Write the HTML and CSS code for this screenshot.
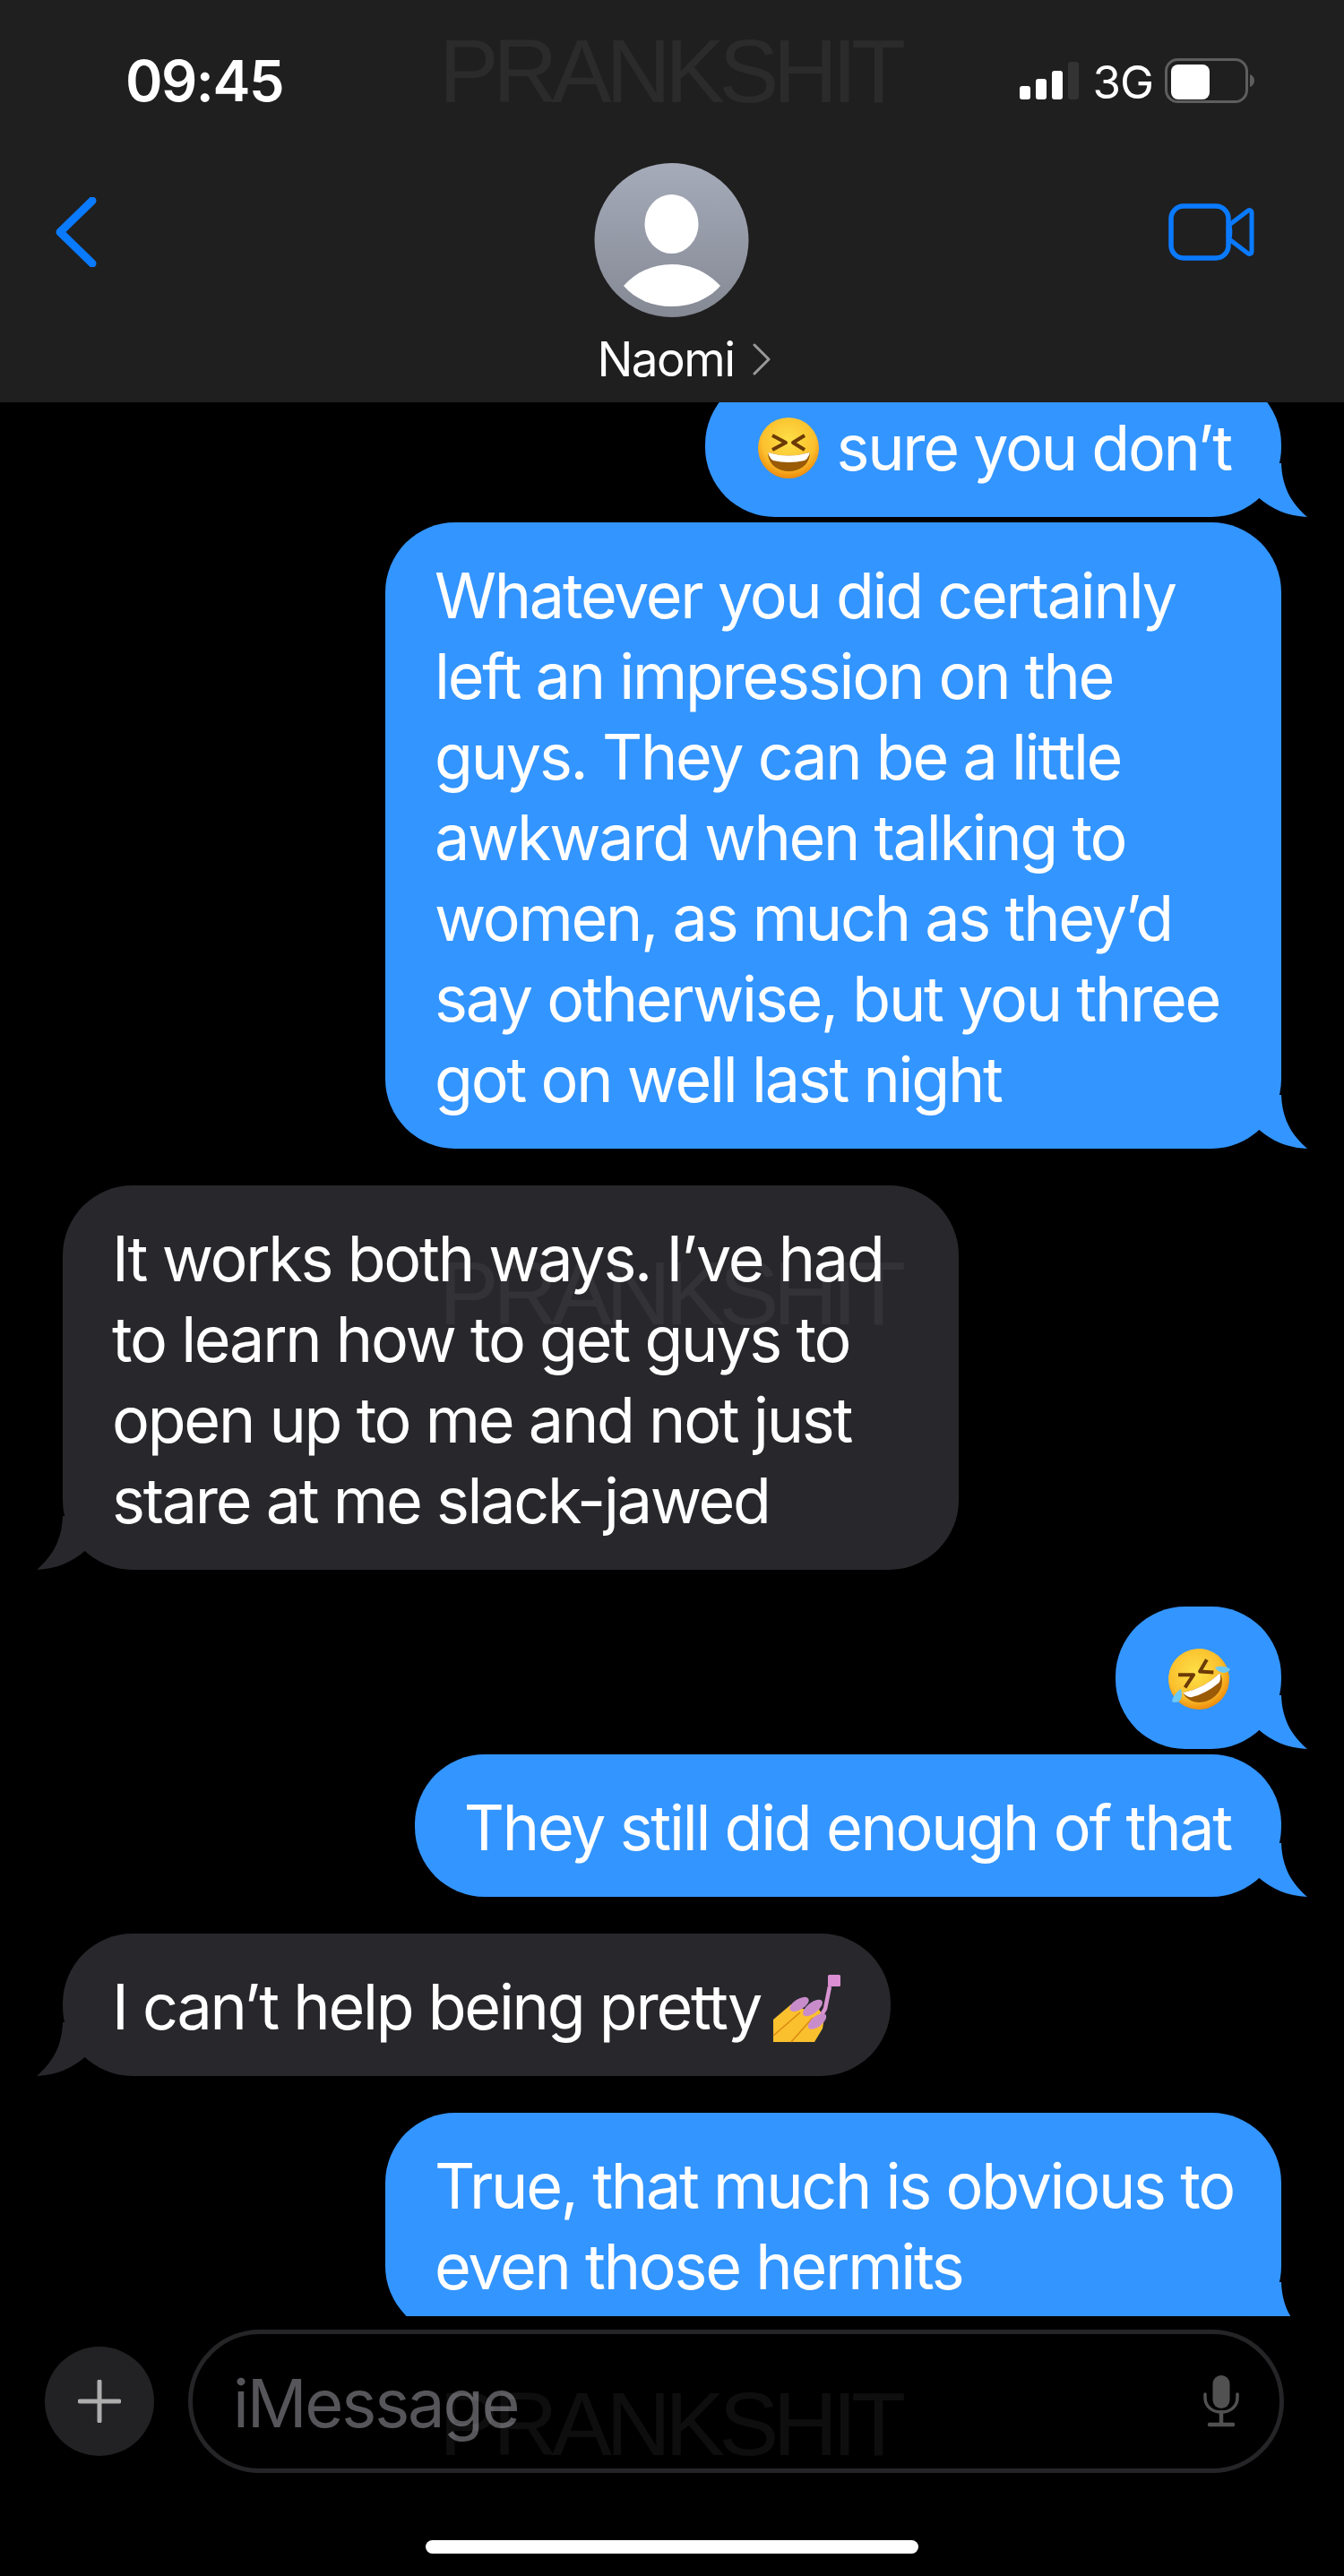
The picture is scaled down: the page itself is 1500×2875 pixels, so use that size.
FILE: index.html
```html
<!DOCTYPE html>
<html lang="en">

<head>
    <meta charset="UTF-8">
    <meta name="viewport" content="width=device-width, initial-scale=1.0">
    <title>Naomi</title>
    <link rel="stylesheet" href="styles.css">
</head>

<body>
    <svg class="defs" width="0" height="0">
        <defs>
            <radialGradient id="faceFill" cx="50%" cy="38%" r="62%">
                <stop offset="0%" stop-color="#fde047"/>
                <stop offset="70%" stop-color="#fbc02d"/>
                <stop offset="100%" stop-color="#ee8a0b"/>
            </radialGradient>
            <linearGradient id="avatarFill" x1="0" y1="0" x2="0" y2="1">
                <stop offset="0%" stop-color="#a6abba"/>
                <stop offset="100%" stop-color="#858994"/>
            </linearGradient>
            <path id="tailPath" d="M50 0C51 28 62 45 79 60C57 59 40 52 23 37L0 30L0 0Z"/>
        </defs>
    </svg>

    <header class="header">
        <div class="status">
            <span class="time">09:45</span>
            <div class="status-right">
                <div class="signal">
                    <span class="bar bar-1"></span>
                    <span class="bar bar-2"></span>
                    <span class="bar bar-3"></span>
                    <span class="bar bar-4"></span>
                </div>
                <span class="network">3G</span>
                <svg class="battery" width="100" height="50" viewBox="0 0 100 50">
                    <rect x="1.5" y="1.5" width="90" height="47" rx="13" fill="none" stroke="#5e5e5e" stroke-width="3"/>
                    <rect x="7" y="7" width="43" height="39" rx="8" fill="#fff"/>
                    <path d="M95 18C98 19 100 22 100 25C100 28 98 31 95 32Z" fill="#5e5e5e"/>
                </svg>
            </div>
        </div>
        <nav class="nav">
            <svg class="back" width="46" height="78" viewBox="0 0 46 78">
                <path d="M41 4L5 39L41 74" fill="none" stroke="#0a7aff" stroke-width="9" stroke-linecap="round" stroke-linejoin="round"/>
            </svg>
            <div class="contact">
                <svg class="avatar" width="173" height="172" viewBox="0 0 173 172">
                    <circle cx="86.5" cy="86" r="86" fill="url(#avatarFill)"/>
                    <ellipse cx="86.5" cy="68" rx="30" ry="33" fill="#fff"/>
                    <path d="M33 137C46 122 65 113 86.5 113C108 113 127 122 141 137C128 152 108 160 86.5 160C65 160 46 152 33 137Z" fill="#fff"/>
                </svg>
                <div class="name-row">
                    <span class="name">Naomi</span>
                    <svg width="20" height="36" viewBox="0 0 20 36">
                        <path d="M2 2L18 18L2 34" fill="none" stroke="#9a9a9a" stroke-width="3" stroke-linecap="round" stroke-linejoin="round"/>
                    </svg>
                </div>
            </div>
            <svg class="video" width="96" height="64" viewBox="0 0 96 64">
                <rect x="3" y="3" width="64" height="58" rx="14" fill="none" stroke="#0a7aff" stroke-width="5.5"/>
                <path d="M68 24L89 8C91 7 93 8 93 10V54C93 56 91 57 89 56L68 40C69 35 69 29 68 24Z" fill="none" stroke="#0a7aff" stroke-width="5" stroke-linejoin="round"/>
            </svg>
        </nav>
    </header>

    <main class="thread">
        <div class="bubble sent first">
            <svg class="emoji emoji-squint" viewBox="0 0 68 68">
                <circle cx="34" cy="34" r="34" fill="url(#faceFill)"/>
                <path d="M16 20L31 28L16 36M52 20L39 28L52 36" fill="none" stroke="#6b3a06" stroke-width="4" stroke-linejoin="round"/>
                <path d="M11 39Q34 46 58 39C58 52 47 60 34.5 60C22 60 11 52 11 39Z" fill="#9a5a06"/>
                <path d="M11 39Q34 46 58 39Q56 46 52 48Q34 52 17 48Q13 46 11 39Z" fill="#fff"/>
            </svg>
            <span class="emoji-text">sure you don’t</span>
            <svg class="tail" width="80" height="60" viewBox="0 0 80 60"><use href="#tailPath"/></svg>
        </div>
        <div class="bubble sent wide tight">
            Whatever you did certainly<br>
            left an impression on the<br>
            guys. They can be a little<br>
            awkward when talking to<br>
            women, as much as they’d<br>
            say otherwise, but you three<br>
            got on well last night
            <svg class="tail" width="80" height="60" viewBox="0 0 80 60"><use href="#tailPath"/></svg>
        </div>
        <div class="bubble received wide">
            It works both ways. I’ve had<br>
            to learn how to get guys to<br>
            open up to me and not just<br>
            stare at me slack-jawed
            <svg class="tail" width="80" height="60" viewBox="0 0 80 60"><use href="#tailPath"/></svg>
        </div>
        <div class="bubble sent emoji-only">
            <svg class="emoji emoji-rofl" viewBox="0 0 70 70">
                <g transform="rotate(-28 35 35)">
                    <circle cx="35" cy="35" r="34" fill="url(#faceFill)"/>
                    <path d="M17 20L32 28L17 36M53 20L40 28L53 36" fill="none" stroke="#6b3a06" stroke-width="4" stroke-linejoin="round"/>
                    <path d="M12 40Q35 47 59 40C59 53 48 61 35.5 61C23 61 12 53 12 40Z" fill="#9a5a06"/>
                    <path d="M12 40Q35 47 59 40Q57 47 53 49Q35 53 18 49Q14 47 12 40Z" fill="#fff"/>
                </g>
                <path d="M53 22C58 20 66 20 70 24C68 29 58 30 53 22Z" fill="#6cc8f0"/>
                <path d="M5 60C6 54 11 48 15 46C17 52 16 60 10 61C8 61 6 61 5 60Z" fill="#6cc8f0"/>
            </svg>
            <svg class="tail" width="80" height="60" viewBox="0 0 80 60"><use href="#tailPath"/></svg>
        </div>
        <div class="bubble sent tight">
            They still did enough of that
            <svg class="tail" width="80" height="60" viewBox="0 0 80 60"><use href="#tailPath"/></svg>
        </div>
        <div class="bubble received">
            I can’t help being pretty
            <svg class="emoji emoji-nails" viewBox="0 0 75 75">
                <path d="M0 50L20 33L36 39L50 37L57 48L55 60L46 75L0 75Z" fill="#fbc02d"/>
                <path d="M0 68L30 42M20 75L44 48" fill="none" stroke="#d98a12" stroke-width="1.5"/>
                <path d="M63 13L58 38L52 48" fill="none" stroke="#d994d2" stroke-width="4.5"/>
                <ellipse cx="29" cy="33" rx="12" ry="6" transform="rotate(-32 29 33)" fill="#c98ccb"/>
                <ellipse cx="44" cy="37" rx="13" ry="6" transform="rotate(-38 44 37)" fill="#c98ccb"/>
                <ellipse cx="49" cy="52" rx="12" ry="6" transform="rotate(-38 49 52)" fill="#c98ccb"/>
                <rect x="61" y="0" width="14" height="13" rx="1.5" fill="#dc8ed2"/>
            </svg>
            <svg class="tail" width="80" height="60" viewBox="0 0 80 60"><use href="#tailPath"/></svg>
        </div>
        <div class="bubble sent wide">
            True, that much is obvious to<br>
            even those hermits
            <svg class="tail" width="80" height="60" viewBox="0 0 80 60"><use href="#tailPath"/></svg>
        </div>
    </main>

    <footer class="composer">
        <div class="plus">
            <svg width="48" height="48" viewBox="0 0 48 48">
                <path d="M24 2V46M2 24H46" stroke="#adadad" stroke-width="5" stroke-linecap="round"/>
            </svg>
        </div>
        <div class="input">
            <span class="placeholder">iMessage</span>
            <svg class="mic" width="40" height="58" viewBox="0 0 40 58">
                <rect x="10.5" y="0" width="19" height="37" rx="9.5" fill="#515151"/>
                <path d="M2 21V25C2 35 10 41 20 41C30 41 38 35 38 25V21" fill="none" stroke="#515151" stroke-width="3.5" stroke-linecap="round"/>
                <path d="M20 41V54M7 55H33" fill="none" stroke="#515151" stroke-width="4.5" stroke-linecap="round"/>
            </svg>
        </div>
    </footer>
    <div class="home-row"><div class="home-bar"></div></div>

    <span class="mark mark-top">PRANKSHIT</span>
    <span class="mark mark-mid">PRANKSHIT</span>
    <span class="mark mark-bottom">PRANKSHIT</span>
</body>

</html>
```
FILE: styles.css
```css
* {
    box-sizing: border-box;
}

body {
    position: relative;
    display: flex;
    flex-direction: column;
    width: 1500px;
    height: 2875px;
    margin: 0;
    overflow: hidden;
    background: #000;
    color: #fff;
    font-family: "Inter", "Liberation Sans", sans-serif;
}

.defs {
    position: absolute;
}

/* header */
.header {
    flex: none;
    height: 449px;
    background: #1f1f1f;
    position: relative;
    z-index: 1;
}

.status {
    display: flex;
    justify-content: space-between;
    align-items: center;
    height: 180px;
    padding: 0 100px 0 140px;
}

.time {
    font-size: 63px;
    font-weight: 600;
    letter-spacing: -1.5px;
}

.status-right {
    display: flex;
    align-items: flex-end;
    gap: 13px;
}

.signal {
    display: flex;
    align-items: flex-end;
    gap: 6px;
    height: 42px;
    margin-bottom: 4px;
    margin-right: 2px;
}

.bar {
    width: 12px;
    border-radius: 3px;
    background: #fff;
}

.bar-1 { height: 15px; }
.bar-2 { height: 23px; }
.bar-3 { height: 32px; }
.bar-4 { height: 42px; background: #333; }

.network {
    font-size: 51px;
    line-height: 46px;
    letter-spacing: -1px;
}

.nav {
    display: grid;
    grid-template-columns: 1fr auto 1fr;
    align-items: start;
}

.back {
    margin: 40px 0 0 62px;
}

.contact {
    display: flex;
    flex-direction: column;
    align-items: center;
    padding-top: 2px;
}

.name-row {
    display: flex;
    align-items: center;
    gap: 20px;
    margin: 23px 0 0 26px;
    height: 48px;
}

.name {
    font-size: 53px;
    letter-spacing: -1.5px;
}

.video {
    justify-self: end;
    margin: 47px 100px 0 0;
}

/* messages */
.thread {
    flex: 1;
    display: flex;
    flex-direction: column;
    overflow: hidden;
}

.bubble {
    position: relative;
    flex: none;
    margin-top: 41px;
    padding: 37px 56px 32px 55px;
    border-radius: 78px;
    font-size: 70px;
    line-height: 90px;
    letter-spacing: -2.25px;
    white-space: nowrap;
}

.bubble.first {
    margin-top: -31px;
    display: flex;
    align-items: center;
    gap: 19px;
    padding-left: 59px;
}

.bubble.tight {
    margin-top: 6px;
}

.sent {
    align-self: flex-end;
    margin-right: 70px;
    background: #3395ff;
}

.received {
    align-self: flex-start;
    margin-left: 70px;
    background: #28282c;
}

.wide {
    width: 1000px;
}

.emoji-only {
    width: 185px;
    height: 159px;
    padding: 34px 0 34px 58px;
}

.tail {
    position: absolute;
    bottom: 0;
    right: -30px;
    fill: #3395ff;
}

.received .tail {
    right: auto;
    left: -30px;
    fill: #28282c;
    transform: scaleX(-1);
}

.emoji {
    flex: none;
    overflow: visible;
}

.emoji-squint {
    width: 68px;
    height: 68px;
}

.emoji-rofl {
    display: block;
    width: 70px;
    height: 70px;
    margin-top: 12px;
}

.emoji-nails {
    width: 75px;
    height: 75px;
    margin-left: -3px;
    vertical-align: -14px;
}

/* composer */
.composer {
    flex: none;
    display: flex;
    align-items: center;
    gap: 38px;
    padding: 15px 67px 0 50px;
}

.plus {
    flex: none;
    display: flex;
    align-items: center;
    justify-content: center;
    width: 122px;
    height: 122px;
    border-radius: 50%;
    background: #222224;
}

.input {
    flex: 1;
    display: flex;
    justify-content: space-between;
    align-items: center;
    height: 160px;
    padding: 0 45px 0 45px;
    border: 5px solid #252527;
    border-radius: 80px;
}

.placeholder {
    font-size: 74px;
    letter-spacing: -2.2px;
    color: #56565a;
    margin-top: 3px;
}

.home-row {
    flex: none;
    display: flex;
    justify-content: center;
    height: 115px;
    padding-top: 75px;
}

.home-bar {
    width: 550px;
    height: 15px;
    border-radius: 8px;
    background: #fff;
}

/* watermark sits over everything */
.mark {
    position: absolute;
    left: 490px;
    z-index: 2;
    font-family: "Liberation Sans", sans-serif;
    font-size: 100px;
    line-height: 100px;
    letter-spacing: -6.4px;
    color: rgba(255, 255, 255, 0.055);
    pointer-events: none;
}

.mark-top { top: 29px; }
.mark-mid { top: 1393px; }
.mark-bottom { top: 2655px; }
```
